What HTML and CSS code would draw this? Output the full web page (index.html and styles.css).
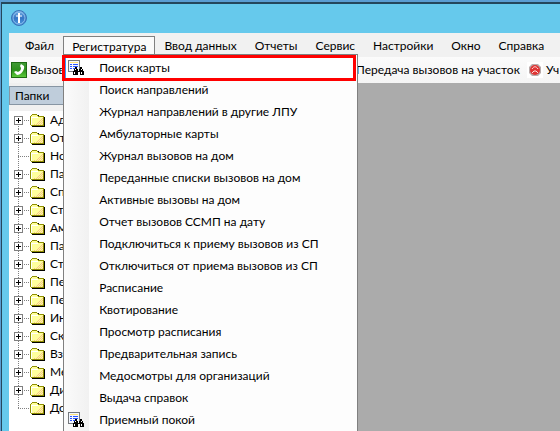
FILE: index.html
```html
<!DOCTYPE html>
<html lang="ru">
<head>
<meta charset="utf-8">
<title>Регистратура</title>
<link rel="stylesheet" href="styles.css">
</head>
<body>
<svg class="defs" aria-hidden="true">
  <defs>
    <linearGradient id="blue" x1="0" y1="0" x2="0" y2="1"><stop offset="0" stop-color="#79b4e8"/><stop offset=".5" stop-color="#3475c4"/><stop offset="1" stop-color="#4e9be0"/></linearGradient>
    <linearGradient id="green" x1="0" y1="0" x2="0" y2="1"><stop offset="0" stop-color="#3f9a35"/><stop offset=".5" stop-color="#2c8f1c"/><stop offset="1" stop-color="#5cc93a"/></linearGradient>
    <pattern id="dither" width="2" height="2" patternUnits="userSpaceOnUse"><path fill="#f7c68c" d="M0 0h1v1H0zM1 1h1v1H1z"/></pattern>
    <symbol id="folder" viewBox="0 0 15 13">
      <path fill="#000" d="M8 1h1v1H8zM14 3h1v10H2v-1h12z"/>
      <path fill="#8f8f00" d="M2 0h5v1h1v1h6v10H1v-1H0V2h1V1h1z"/>
      <path fill="#ffff9c" d="M2 1h5v1h1v1h5v8H1V2h1z"/>
      <path fill="#fff" d="M1 3h7v1H2v7H1z"/>
      <path fill="url(#dither)" d="M11 4h2v7H4v-1h2V9h2V7h2V5h1z"/>
    </symbol>
    <symbol id="search" viewBox="0 0 16 16">
      <path fill="#75787c" d="M0 0h12v12H0z"/>
      <path fill="#f4f7ff" d="M1 1h10v10H1z"/>
      <path fill="#ffe27a" d="M2 2h8v1H2z"/>
      <path fill="#2a55ff" d="M2 4h2v1H2zM5 4h5v1H5zM2 6h2v1H2zM5 6h5v1H5zM2 8h2v1H2zM5 8h2v1H5z"/>
      <path fill="#000" d="M7 7h2v2h1v1h1V9h1V7h2v2h1v2h1v4h-4v-3h-2v3H5v-4h1V9h1z"/>
      <path fill="#fff" d="M7 9h1v1H7zM13 9h1v1h-1zM6 12h1v2H6zM13 12h1v2h-1zM10 10h1v1h-1z"/>
    </symbol>
  </defs>
</svg>
<div class="window">
  <header class="titlebar">
    <svg class="app-icon" viewBox="0 0 16 16"><circle cx="8" cy="8" r="7.5" fill="url(#blue)" stroke="#3b73b8"/><circle cx="8" cy="8" r="6" fill="none" stroke="#8dbdea"/><path stroke="#fff" stroke-width="2" d="M8 3v10"/><path stroke="#fff" d="M5 6h6"/></svg>
  </header>
  <div class="client">
    <nav class="menubar">
      <button>Файл</button>
      <div class="menu-anchor">
        <button class="open" aria-expanded="true">Регистратура</button>
        <div class="menu">
          <button class="selected"><svg class="item-icon"><use href="#search"/></svg>Поиск карты</button>
          <button>Поиск направлений</button>
          <button>Журнал направлений в другие ЛПУ</button>
          <button>Амбулаторные карты</button>
          <button>Журнал вызовов на дом</button>
          <button>Переданные списки вызовов на дом</button>
          <button>Активные вызовы на дом</button>
          <button>Отчет вызовов ССМП на дату</button>
          <button>Подключиться к приему вызовов из СП</button>
          <button>Отключиться от приема вызовов из СП</button>
          <button>Расписание</button>
          <button>Квотирование</button>
          <button>Просмотр расписания</button>
          <button>Предварительная запись</button>
          <button>Медосмотры для организаций</button>
          <button>Выдача справок</button>
          <button><svg class="item-icon"><use href="#search"/></svg>Приемный покой</button>
          <div class="callout"></div>
        </div>
      </div>
      <button>Ввод данных</button>
      <button>Отчеты</button>
      <button>Сервис</button>
      <button>Настройки</button>
      <button>Окно</button>
      <button>Справка</button>
    </nav>
    <div class="toolbar">
      <button><svg class="tool-icon" viewBox="0 0 16 16"><path fill="#1d6a12" d="M0 0h16v16H0z"/><path fill="url(#green)" d="M1 1h14v14H1z"/><path fill="#fff" d="M10 2l3 2c1 4-3 9-7 9l-3-3 2-1 2 1c2-1 3-2 3-4L9 4z"/></svg>Вызов</button>
      <button>Передача вызовов на участок</button>
      <button><svg class="tool-icon" viewBox="0 0 16 16"><path fill="#fff" d="M0 0h16v16H0z"/><path fill="#b8aaaa" d="M5 2h6l3 3v6l-3 3H5l-3-3V5z"/><circle cx="8" cy="8" r="5" fill="#df3434"/><path fill="none" stroke="#ffe1dd" d="M5 7c2-3 4-3 6 0M5 11l2-2h2l2 2"/></svg>Уч</button>
    </div>
    <main class="workspace">
      <aside class="folders">
        <h2>Папки</h2>
        <ul class="tree">
          <li><button class="toggle" aria-label="Развернуть"></button><svg class="folder"><use href="#folder"/></svg>Ад</li>
          <li><button class="toggle" aria-label="Развернуть"></button><svg class="folder"><use href="#folder"/></svg>От</li>
          <li><span class="leaf"></span><svg class="folder"><use href="#folder"/></svg>Но</li>
          <li><button class="toggle" aria-label="Развернуть"></button><svg class="folder"><use href="#folder"/></svg>Па</li>
          <li><button class="toggle" aria-label="Развернуть"></button><svg class="folder"><use href="#folder"/></svg>Сп</li>
          <li><button class="toggle" aria-label="Развернуть"></button><svg class="folder"><use href="#folder"/></svg>Ст</li>
          <li><button class="toggle" aria-label="Развернуть"></button><svg class="folder"><use href="#folder"/></svg>Ам</li>
          <li><button class="toggle" aria-label="Развернуть"></button><svg class="folder"><use href="#folder"/></svg>Па</li>
          <li><button class="toggle" aria-label="Развернуть"></button><svg class="folder"><use href="#folder"/></svg>Ст</li>
          <li><button class="toggle" aria-label="Развернуть"></button><svg class="folder"><use href="#folder"/></svg>Пе</li>
          <li><button class="toggle" aria-label="Развернуть"></button><svg class="folder"><use href="#folder"/></svg>Пе</li>
          <li><button class="toggle" aria-label="Развернуть"></button><svg class="folder"><use href="#folder"/></svg>Ин</li>
          <li><button class="toggle" aria-label="Развернуть"></button><svg class="folder"><use href="#folder"/></svg>Ск</li>
          <li><button class="toggle" aria-label="Развернуть"></button><svg class="folder"><use href="#folder"/></svg>Вз</li>
          <li><button class="toggle" aria-label="Развернуть"></button><svg class="folder"><use href="#folder"/></svg>Ме</li>
          <li><button class="toggle" aria-label="Развернуть"></button><svg class="folder"><use href="#folder"/></svg>Ди</li>
          <li><span class="leaf"></span><svg class="folder"><use href="#folder"/></svg>До</li>
        </ul>
      </aside>
      <section class="documents"></section>
    </main>
  </div>
</div>
</body>
</html>
```
FILE: styles.css
```css
* { box-sizing: border-box; }
body {
  margin: 0;
  height: 100vh;
  overflow: hidden;
  background: #5a9dd2;
  font: 12px/18px Lato, "Liberation Sans", sans-serif;
  color: #000;
}
button {
  margin: 0;
  padding: 0;
  border: 0;
  background: none;
  font: inherit;
  color: inherit;
  white-space: nowrap;
}
svg { display: block; flex: none; }
.defs { position: absolute; width: 0; height: 0; }
.window {
  height: calc(100vh - 2px);
  margin: 2px 0 0 1px;
  display: flex;
  flex-direction: column;
  border: solid #24475c;
  border-width: 2px 0 0 1px;
  background: #66c9ec;
}
.titlebar { height: 29px; padding: 6px 9px; }
.app-icon { width: 16px; height: 16px; }
.client {
  flex: 1;
  min-height: 0;
  margin-left: 7px;
  display: flex;
  flex-direction: column;
  background: #f0f0f0;
}
.menubar {
  height: 24px;
  padding: 3px 0 0 7px;
  display: flex;
  background: #f1f1f1;
}
.menubar > button, .menu-anchor > button { height: 20px; padding: 0 9px; }
.menu-anchor { position: relative; }
.menu-anchor > .open {
  padding: 0 8px;
  border: 1px solid #808080;
  border-bottom: 0;
  background: #fafafa;
}
.menu {
  position: absolute;
  z-index: 1;
  top: 18px;
  left: 0;
  width: 295px;
  padding: 2px 1px;
  border: 1px solid #808080;
  background: linear-gradient(90deg, #fbfbfb, #f1f1f1 25px, #fdfdfd 25px);
}
.menu > button {
  display: flex;
  align-items: center;
  position: relative;
  width: 100%;
  height: 22px;
  padding-left: 34px;
  text-align: left;
}
.menu > .selected { border: 1px solid #3399ff; background: #fff; padding-left: 33px; }
.item-icon { width: 16px; height: 16px; margin: 0 15px 0 -31px; }
.callout {
  position: absolute;
  top: 0;
  left: -2px;
  right: 1px;
  height: 26px;
  border: 3px solid #ff0000;
}
.toolbar {
  height: 26px;
  padding: 0 2px;
  display: grid;
  grid-template-columns: 345px 171px auto;
  justify-content: start;
  background: linear-gradient(#fbfbfb, #f4f4f4);
}
.toolbar button { display: flex; align-items: center; gap: 3px; }
.tool-icon { width: 16px; height: 16px; }
.workspace { flex: 1; min-height: 0; display: flex; }
.folders { width: 160px; padding-top: 3px; }
.folders h2 {
  margin: 0 0 6px;
  height: 19px;
  padding-left: 5px;
  border: 1px solid #8795a3;
  background: #bfcddb;
  font: inherit;
}
.tree {
  margin: 0;
  padding: 0 0 20px 5px;
  list-style: none;
  background: #fff;
}
.tree li {
  height: 18px;
  display: flex;
  align-items: center;
  background:
    repeating-linear-gradient(#808080 0 1px, transparent 1px 2px) 4px 0 / 1px 100% no-repeat,
    repeating-linear-gradient(90deg, #808080 0 1px, transparent 1px 2px) 4px 9px / 11px 1px no-repeat;
}
.tree li:first-child { background-position: 4px 9px; }
.tree li:last-child { background-size: 1px 9px, 11px 1px; }
.toggle, .leaf { flex: none; width: 9px; margin-right: 7px; }
.toggle {
  height: 9px;
  border: 1px solid #808080;
  background:
    linear-gradient(#000, #000) center / 5px 1px no-repeat,
    linear-gradient(#000, #000) center / 1px 5px no-repeat,
    #fff;
}
.folder { width: 15px; height: 13px; margin-right: 5px; }
.documents { flex: 1; background: #ababab; }
```
